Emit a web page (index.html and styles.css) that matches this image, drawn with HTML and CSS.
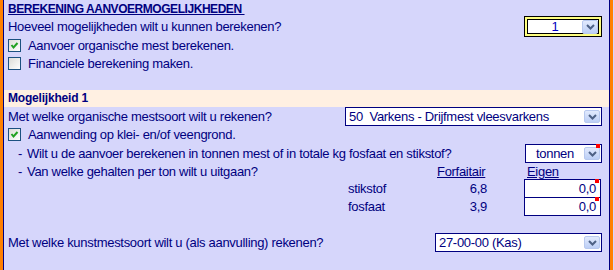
FILE: index.html
```html
<!DOCTYPE html>
<html>
<head>
<meta charset="utf-8">
<link rel="stylesheet" href="styles.css">
</head>
<body>
<div class="frame">
  <div class="panel">
    <div class="title"><u>BEREKENING AANVOERMOGELIJKHEDEN&nbsp;</u></div>

    <div class="row r-hoeveel">
      <span class="txt">Hoeveel mogelijkheden wilt u kunnen berekenen?</span>
      <div class="select sel-yellow">
        <div class="sel-inner">
          <span class="val center">1</span>
          <span class="btn"><svg width="9" height="6" viewBox="0 0 9 6"><path d="M1 1 L4.5 4.5 L8 1" fill="none" stroke="#4d6185" stroke-width="2"/></svg></span>
        </div>
      </div>
    </div>

    <div class="row r-check">
      <span class="cb"><svg width="11" height="11" viewBox="0 0 11 11"><path d="M2.5 5 L4.5 7.5 L8.5 3" fill="none" stroke="#21a121" stroke-width="2"/></svg></span>
      <span class="txt">Aanvoer organische mest berekenen.</span>
    </div>
    <div class="row r-check r-check2">
      <span class="cb"></span>
      <span class="txt">Financiele berekening maken.</span>
    </div>

    <div class="band">Mogelijkheid 1</div>

    <div class="row r-mest">
      <span class="txt">Met welke organische mestsoort wilt u rekenen?</span>
      <div class="select sel-mest">
        <span class="val pre">50  Varkens - Drijfmest vleesvarkens</span>
        <span class="btn"><svg width="9" height="6" viewBox="0 0 9 6"><path d="M1 1 L4.5 4.5 L8 1" fill="none" stroke="#4d6185" stroke-width="2"/></svg></span>
      </div>
    </div>

    <div class="row r-check r-check3">
      <span class="cb"><svg width="11" height="11" viewBox="0 0 11 11"><path d="M2.5 5 L4.5 7.5 L8.5 3" fill="none" stroke="#21a121" stroke-width="2"/></svg></span>
      <span class="txt">Aanwending op klei- en/of veengrond.</span>
    </div>

    <div class="row r-wilt">
      <span class="txt sub"><span class="dash">-</span>Wilt u de aanvoer berekenen in tonnen mest of in totale kg fosfaat en stikstof?</span>
      <div class="select sel-small">
        <span class="val center">tonnen</span>
        <span class="btn"><svg width="9" height="6" viewBox="0 0 9 6"><path d="M1 1 L4.5 4.5 L8 1" fill="none" stroke="#4d6185" stroke-width="2"/></svg></span>
        <span class="mark"></span>
      </div>
    </div>

    <div class="trow t-head">
      <span class="txt sub"><span class="dash">-</span>Van welke gehalten per ton wilt u uitgaan?</span>
      <span></span>
      <span class="txt"><u>Forfaitair</u></span>
      <span></span>
      <span class="txt eigen"><u>Eigen</u></span>
    </div>
    <div class="trow t-val">
      <span></span>
      <span class="txt">stikstof</span>
      <span class="txt num">6,8</span>
      <span></span>
      <div class="input"><span class="val">0,0</span><span class="mark"></span></div>
    </div>
    <div class="trow t-val t-val2">
      <span></span>
      <span class="txt">fosfaat</span>
      <span class="txt num">3,9</span>
      <span></span>
      <div class="input"><span class="val">0,0</span><span class="mark"></span></div>
    </div>

    <div class="row r-kunst">
      <span class="txt">Met welke kunstmestsoort wilt u (als aanvulling) rekenen?</span>
      <div class="select sel-kunst">
        <span class="val">27-00-00 (Kas)</span>
        <span class="btn"><svg width="9" height="6" viewBox="0 0 9 6"><path d="M1 1 L4.5 4.5 L8 1" fill="none" stroke="#4d6185" stroke-width="2"/></svg></span>
      </div>
    </div>
  </div>
</div>
</body>
</html>
```

FILE: styles.css
```css
* { box-sizing: border-box; }
html, body { margin: 0; padding: 0; }
body {
  background: #d6d6fb;
  font-family: "Liberation Sans", Arial, sans-serif;
  font-size: 13px;
  letter-spacing: -0.3px;
  color: #000080;
  width: 614px;
  height: 270px;
  overflow: hidden;
}
.frame {
  width: 613px;
  height: 270px;
  border-left: 3px solid #ff8000;
  border-right: 3px solid #ff8000;
}
.panel {
  height: 270px;
  background: #d6d6fb;
  border-left: 1px solid #000080;
  border-right: 1px solid #000080;
  padding: 0 7px 0 4px;
}
.txt { white-space: nowrap; line-height: 15px; }
.title {
  padding-top: 3px;
  height: 16px;
  line-height: 13px;
  font-size: 12px;
  letter-spacing: -0.45px;
  font-weight: bold;
  white-space: nowrap;
}
.row {
  display: flex;
  align-items: center;
  justify-content: space-between;
}
.r-hoeveel { height: 21px; }
.r-check { height: 17px; justify-content: flex-start; }
.r-check2 { height: 18px; }
.r-check3 { height: 17px; }
.cb {
  width: 13px;
  height: 13px;
  border: 1px solid #1c5180;
  background: linear-gradient(135deg, #dcdcd7, #ffffff);
  margin-right: 7px;
  display: flex;
  align-items: center;
  justify-content: center;
}
.cb svg { display: block; }
.band {
  margin-top: 18px;
  margin-left: -4px;
  margin-right: -7px;
  padding-left: 4px;
  height: 17px;
  line-height: 17px;
  background: #fff0e2;
  font-weight: bold;
  font-size: 12px;
  letter-spacing: -0.2px;
}
.r-mest { height: 19px; }
.r-wilt { height: 19px; margin-top: 1px; }
.r-kunst { height: 19px; margin-top: 17px; }
.sub { padding-left: 10px; }
.dash { display: inline-block; width: 9px; }

.select {
  position: relative;
  display: flex;
  align-items: center;
  background: #fff;
  border: 1px solid #000080;
  height: 19px;
}
.sel-yellow {
  width: 78px;
  height: 21px;
  border: 1px solid #000;
  background: #ffff80;
  padding: 2px;
}
.sel-inner {
  display: flex;
  align-items: center;
  width: 100%;
  height: 100%;
  background: #fff;
  border: 1px solid #000;
}
.sel-mest { width: 257px; }
.sel-small { width: 77px; }
.sel-kunst { width: 167px; }
.val {
  flex: 1;
  padding-left: 3px;
  white-space: nowrap;
  line-height: 15px;
}
.val.center { text-align: center; padding-left: 0; }
.val.pre { white-space: pre; }
.sel-yellow .val { color: #0000c0; }
.btn {
  width: 16px;
  height: 13px;
  margin-right: 1px;
  border: 1px solid #b8c9ef;
  border-radius: 2px;
  background: linear-gradient(#e2eafd, #bccff6);
  display: flex;
  align-items: center;
  justify-content: center;
}
.sel-yellow .btn { height: 14px; margin-right: 0; }
.btn svg { display: block; }
.mark {
  position: absolute;
  top: -1px;
  right: 1px;
  width: 4px;
  height: 4px;
  background: #ff0000;
}

.trow {
  display: grid;
  grid-template-columns: 340px 89px 50px 37px 77px;
  align-items: center;
}
.t-head { height: 16px; }
.t-val { height: 19px; }
.t-val2 { margin-top: -1px; }
.num { text-align: right; }
.eigen { padding-left: 3px; }
.input {
  position: relative;
  height: 19px;
  background: #fff;
  border: 1px solid #000080;
  display: flex;
  align-items: center;
}
.input .val { text-align: right; padding-right: 4px; }
```
